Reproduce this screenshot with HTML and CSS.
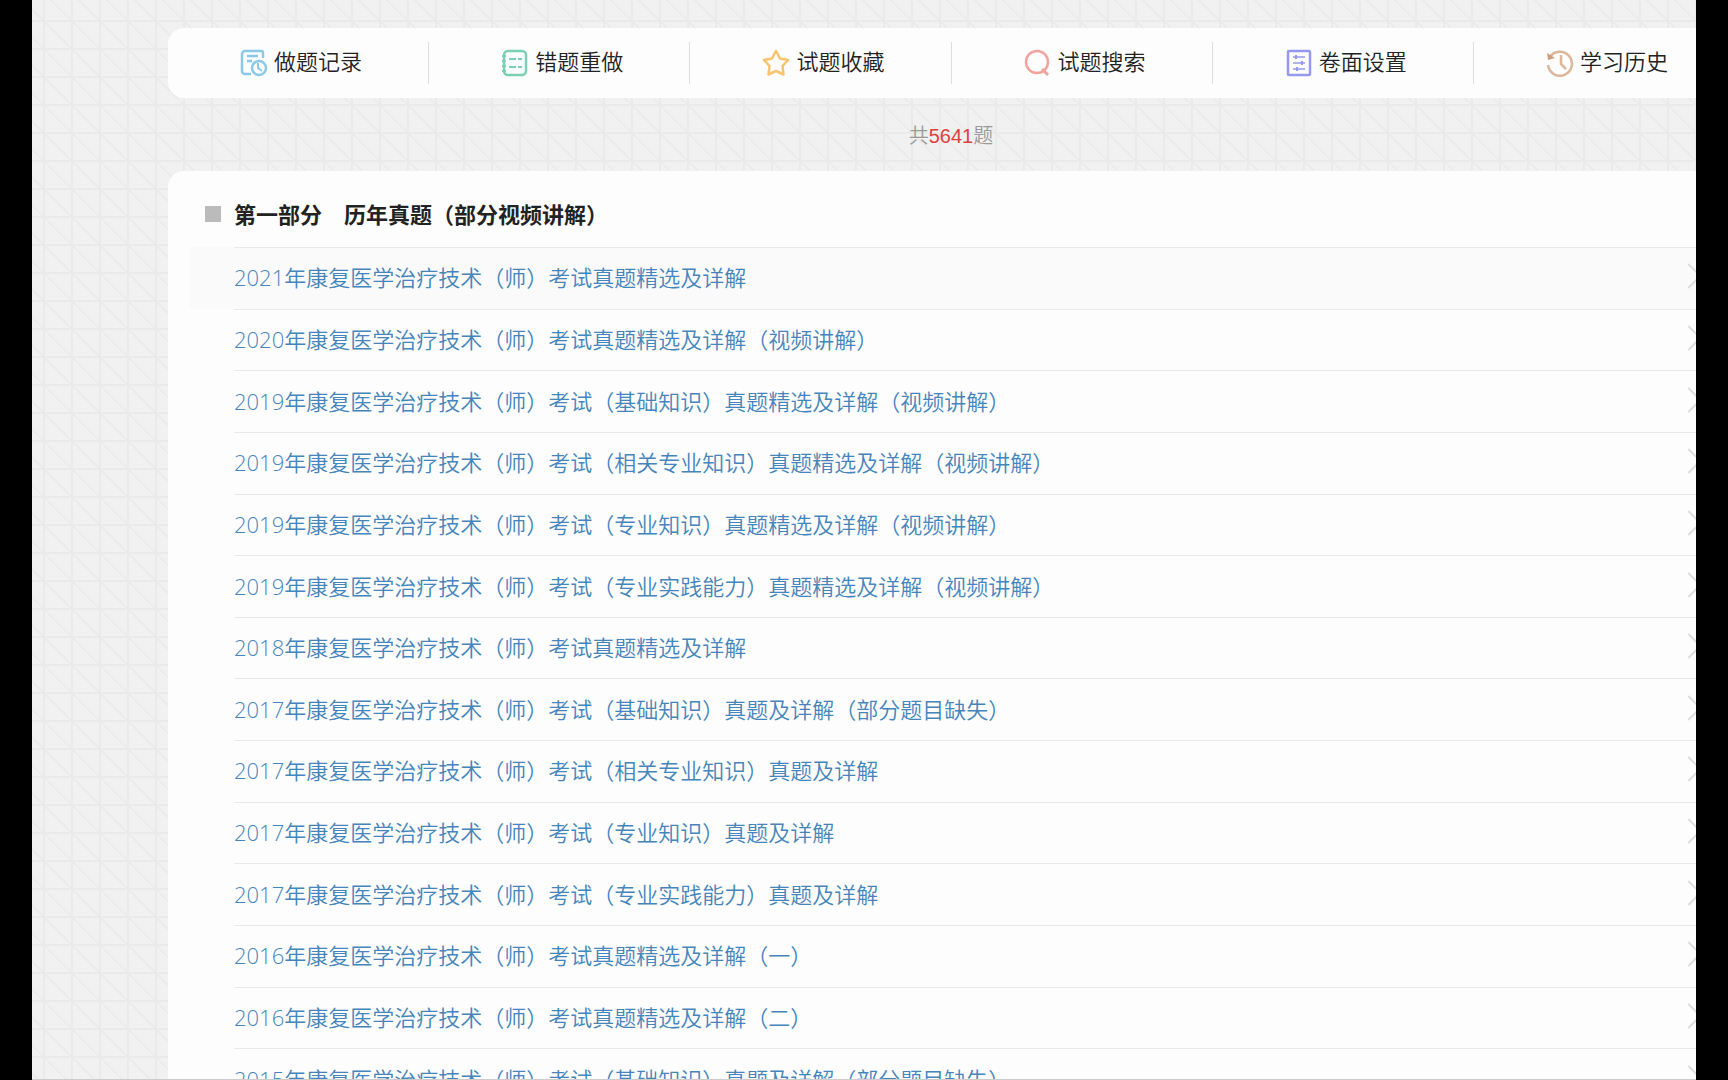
FILE: index.html
```html
<!DOCTYPE html>
<html lang="zh-CN">
<head>
<meta charset="utf-8">
<title>历年真题</title>
<link rel="stylesheet" href="styles.css">
</head>
<body>
<div class="frame">
<main class="page">
  <nav class="toolbar">
    <a class="tool" href="#"><svg class="icon" viewBox="0 0 28 28" fill="none" stroke="#8ac9e9" stroke-width="2.500"><path d="M11 25H5a3 3 0 0 1-3-3V5a3 3 0 0 1 3-3h16a2 2 0 0 1 2 2v5"/><path d="M7 7h11M7 12h5"/><circle cx="19" cy="19" r="7"/><path d="M18 14v5l4 3" stroke-width="2"/></svg>做题记录</a>
    <a class="tool" href="#"><svg class="icon" viewBox="0 0 28 28" fill="none" stroke="#79d0b5" stroke-width="2.500"><rect x="3" y="2" width="22" height="24" rx="4"/><path d="M1 7h4M1 12h4M1 17h4M1 22h4M8 10h7M17 10h4M8 18h7M17 18h4" stroke-width="2"/></svg>错题重做</a>
    <a class="tool" href="#"><svg class="icon" viewBox="0 0 28 28" fill="none" stroke="#f8c36c" stroke-width="2.500" stroke-linejoin="round"><path d="M14 2l4 7.500 8 1.500-5.500 6 1 8.500L14 22l-7.500 3.500 1-8.500L2 11l8-1.500z"/></svg>试题收藏</a>
    <a class="tool" href="#"><svg class="icon" viewBox="0 0 28 28" fill="none" stroke="#f3a39d" stroke-width="2.500"><circle cx="13" cy="13" r="11"/><path d="M18 20l6 6" stroke-width="3"/></svg>试题搜索</a>
    <a class="tool" href="#"><svg class="icon" viewBox="0 0 28 28" fill="none" stroke="#9698ee" stroke-width="2.500"><rect x="3" y="2" width="22" height="24" rx="1"/><path d="M8 8h12M8 14h12M8 20h12" stroke-width="1.500"/><path d="M11 6v4M17 12v4M12 18v4" stroke-width="2"/></svg>卷面设置</a>
    <a class="tool" href="#"><svg class="icon" viewBox="0 0 28 28" fill="none" stroke="#dcb79b" stroke-width="2.500"><path d="M4 8a12 12 0 1 1-2 8"/><path d="M1 4l1 7 7-2z" fill="#cf9f7c" stroke="none"/><path d="M15 6v9l5 5"/></svg>学习历史</a>
  </nav>
  <p class="count">共<span class="number">5641</span>题</p>
  <section class="card">
    <h2 class="title">第一部分　历年真题（部分视频讲解）</h2>
    <ul class="list">
      <li class="row current"><a class="link" href="#">2021年康复医学治疗技术（师）考试真题精选及详解</a></li>
      <li class="row"><a class="link" href="#">2020年康复医学治疗技术（师）考试真题精选及详解（视频讲解）</a></li>
      <li class="row"><a class="link" href="#">2019年康复医学治疗技术（师）考试（基础知识）真题精选及详解（视频讲解）</a></li>
      <li class="row"><a class="link" href="#">2019年康复医学治疗技术（师）考试（相关专业知识）真题精选及详解（视频讲解）</a></li>
      <li class="row"><a class="link" href="#">2019年康复医学治疗技术（师）考试（专业知识）真题精选及详解（视频讲解）</a></li>
      <li class="row"><a class="link" href="#">2019年康复医学治疗技术（师）考试（专业实践能力）真题精选及详解（视频讲解）</a></li>
      <li class="row"><a class="link" href="#">2018年康复医学治疗技术（师）考试真题精选及详解</a></li>
      <li class="row"><a class="link" href="#">2017年康复医学治疗技术（师）考试（基础知识）真题及详解（部分题目缺失）</a></li>
      <li class="row"><a class="link" href="#">2017年康复医学治疗技术（师）考试（相关专业知识）真题及详解</a></li>
      <li class="row"><a class="link" href="#">2017年康复医学治疗技术（师）考试（专业知识）真题及详解</a></li>
      <li class="row"><a class="link" href="#">2017年康复医学治疗技术（师）考试（专业实践能力）真题及详解</a></li>
      <li class="row"><a class="link" href="#">2016年康复医学治疗技术（师）考试真题精选及详解（一）</a></li>
      <li class="row"><a class="link" href="#">2016年康复医学治疗技术（师）考试真题精选及详解（二）</a></li>
      <li class="row"><a class="link" href="#">2015年康复医学治疗技术（师）考试（基础知识）真题及详解（部分题目缺失）</a></li>
    </ul>
  </section>
</main>
</div>
</body>
</html>
```
FILE: styles.css
```css
* {
  box-sizing: border-box;
}

body {
  margin: 0;
  padding: 0 32px;
  background: #000;
  font-family: "Open Sans", "Noto Sans CJK SC", sans-serif;
  font-size: 22px;
  font-weight: 350;
  color: #222;
}

.frame {
  height: 100vh;
  overflow: hidden;
  padding: 28px 0 0 136px;
  border-bottom: 1px solid #ccc;
  background-color: #f1f1f1;
  background-image:
    linear-gradient(#eaeaea 2px, transparent 2px),
    linear-gradient(90deg, #eaeaea 2px, transparent 2px),
    linear-gradient(45deg, transparent 47%, #e8e8e8 50%, transparent 53%);
  background-size: 28px 28px;
  background-position: 11px 20px;
}

/* The content is wider than the visible frame and runs off its right side. */
.page {
  margin-right: -38px;
}

.toolbar {
  display: flex;
  padding: 14px 0;
  border-radius: 16px;
  background: #fdfdfd;
}

.tool {
  flex: 1;
  display: flex;
  align-items: center;
  justify-content: center;
  gap: 6px;
  height: 42px;
  padding: 0 0 6px 6px;
  border-right: 1px solid #ddd;
  color: #222;
  text-decoration: none;
}

.tool:last-child {
  border-right: 0;
}

.icon {
  width: 28px;
  height: 28px;
  margin-top: 6px;
}

.count {
  margin: 0;
  padding-top: 4px;
  font-family: "Liberation Sans", "Noto Sans CJK SC", sans-serif;
  font-size: 20px;
  line-height: 69px;
  text-align: center;
  color: #999;
}

.number {
  color: #e0403c;
}

.card {
  padding: 12px 22px 0;
  border-radius: 16px;
  background: #fdfdfd;
}

.title {
  display: flex;
  align-items: center;
  gap: 13px;
  margin: 0;
  padding: 0 0 2px 15px;
  font-size: 22px;
  font-weight: 700;
  line-height: 62px;
}

.title::before {
  content: "";
  width: 16px;
  height: 16px;
  background: #bbb;
}

.list {
  display: grid;
  grid-auto-rows: 1fr;
  min-height: 863px;
  margin: 0;
  padding: 0;
  list-style: none;
}

.row {
  display: flex;
  padding-left: 44px;
}

.current {
  background: #fafafa;
}

.link {
  flex: 1;
  display: flex;
  align-items: center;
  justify-content: space-between;
  padding: 0 14px 4px 0;
  border-top: 1px solid #e9e9e9;
  color: #4585bb;
  text-decoration: none;
}

.link::after {
  content: "";
  width: 16px;
  height: 16px;
  border: solid #ddd;
  border-width: 2px 2px 0 0;
  transform: rotate(45deg);
}
```
